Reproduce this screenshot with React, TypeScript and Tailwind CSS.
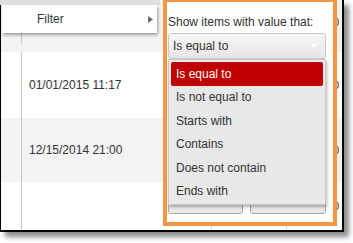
import React from "react";

const items = [
  "Is equal to",
  "Is not equal to",
  "Starts with",
  "Contains",
  "Does not contain",
  "Ends with",
];

function Row({
  bg,
  h,
  date,
  extraCls,
}: {
  bg: string;
  h: string;
  date?: string;
  extraCls?: string;
}) {
  return (
    <div className={`flex ${bg} ${h} ${extraCls ?? ""}`}>
      <div className="w-[21px] shrink-0 border-r border-[#c8c8c8]" />
      <div className="w-[190px] shrink-0 border-r border-[#d4d4d4] flex items-center pl-[7px] text-[12px] text-[#333]">
        {date}
      </div>
      <div className="w-[75px] shrink-0 border-r border-[#d4d4d4]" />
      <div className="flex-1 flex items-center pl-[46px] text-[11px] text-[#333] whitespace-nowrap">
        0
      </div>
    </div>
  );
}

export default function App() {
  return (
    <div
      className="relative w-[353px] h-[243px] bg-white overflow-hidden"
      style={{ fontFamily: '"Liberation Sans", Arial, sans-serif' }}
    >
      {/* screenshot frame with grid */}
      <div className="relative w-[344px] h-[232px] border-l border-r-2 border-b-2 border-black bg-white overflow-hidden shadow-[5px_5px_5px_rgba(0,0,0,0.45)] flex flex-col">
        <Row bg="bg-[#f3f3f3]" h="h-[52px]" extraCls="pb-[8px]" />
        <Row bg="bg-white" h="h-[66px]" date="01/01/2015 11:17" />
        <Row bg="bg-[#f3f3f3]" h="h-[64px]" date="12/15/2014 21:00" />
        <Row bg="bg-white" h="flex-1" />
      </div>

      {/* context menu "Filter" item */}
      <div className="absolute left-0 top-0 w-[160px] h-[5px] bg-[#dedede]" />
      <div className="absolute left-[2px] top-[5px] w-[155px] h-[28px] bg-white shadow-[1px_2px_3px_rgba(0,0,0,0.35)] flex items-center text-[12px] text-[#333]">
        <span className="pl-[35px] flex-1">Filter</span>
        <svg width="5" height="7" viewBox="0 0 5 7" className="mr-[4px]">
          <path d="M0 0 L5 3.5 L0 7 Z" fill="#6b6b6b" />
        </svg>
      </div>

      {/* orange annotation + popup */}
      <div className="absolute left-[163px] top-[-2px] w-[174px] h-[228px] border-4 border-[#f79646] bg-white flex flex-col text-[12px] text-[#333] pb-[8px]">
        <div className="pl-[1px] pt-[12px] leading-[16px] whitespace-nowrap">
          Show items with value that:
        </div>
        <div className="ml-[1px] mt-[3px] w-[158px] h-[26px] border border-[#c8c8c8] rounded-[3px] bg-gradient-to-b from-[#f7f7f7] to-[#e6e6e6] flex items-center pl-[4px] pr-[8px]">
          <span className="flex-1">Is equal to</span>
          <svg width="7" height="4" viewBox="0 0 7 4">
            <path d="M0 0 L7 0 L3.5 4 Z" fill="#ffffff" />
          </svg>
        </div>
        <div className="mt-auto ml-[1px] flex gap-[7px]">
          <div className="w-[75px] h-[24px] border border-[#a8a8a8] rounded-[3px] bg-[#e9e9e9]" />
          <div className="w-[76px] h-[24px] border border-[#a8a8a8] rounded-[3px] bg-[#e9e9e9]" />
        </div>
      </div>

      {/* dropdown list */}
      <div className="absolute left-[168px] top-[59px] w-[158px] h-[146px] bg-[#e8e8e8] border border-[#cacaca] shadow-[1px_2px_3px_rgba(0,0,0,0.3)] px-[2px] pt-[2px] text-[12px]">
        {items.map((t, i) => (
          <div
            key={t}
            className={
              i === 0
                ? "h-[23.5px] flex items-center pl-[5px] rounded-[2px] bg-[#c00000] text-white"
                : "h-[23.5px] flex items-center pl-[5px] text-[#333]"
            }
          >
            {t}
          </div>
        ))}
      </div>
    </div>
  );
}
